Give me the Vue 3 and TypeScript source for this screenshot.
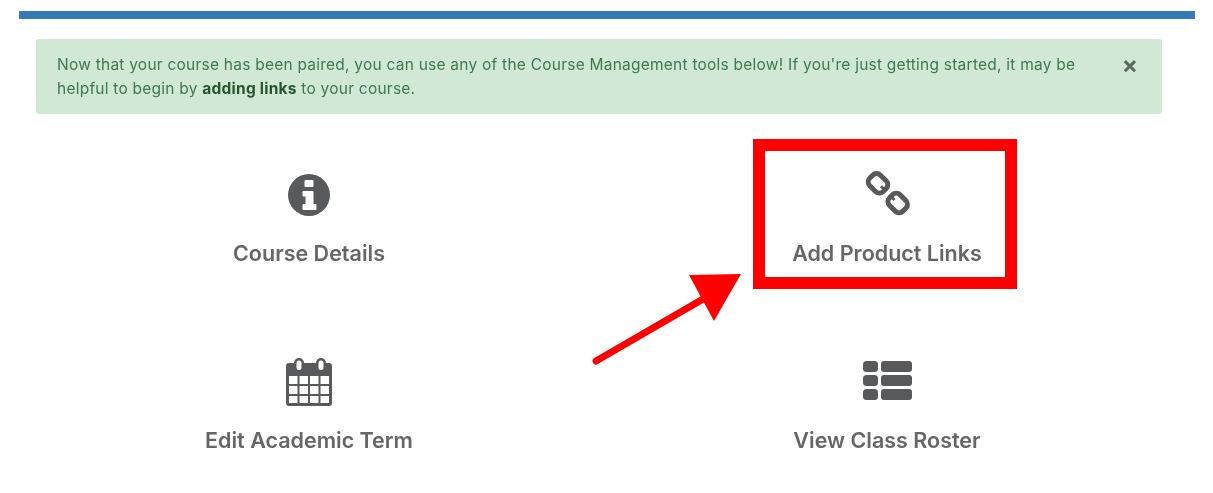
<template>
  <div class="page">
    <div class="page__bar"></div>

    <div class="alert">
      <p class="alert__text">
        Now that your course has been paired, you can use any of the Course Management tools below! If you're just getting started, it may be
        helpful to begin by <strong>adding links</strong> to your course.
      </p>
      <span class="alert__close">×</span>
    </div>

    <div class="tools">
      <div v-for="tool in tools" :key="tool.name" class="tool">
        <div class="tool__icon">
          <svg v-if="tool.icon === 'info'" width="42" height="42" viewBox="0 0 42 42">
            <path
              fill-rule="evenodd"
              d="M21 0a21 21 0 1 0 0 42a21 21 0 1 0 0-42zM17.5 6h7a1 1 0 0 1 1 1v5a1 1 0 0 1-1 1h-7a1 1 0 0 1-1-1v-5a1 1 0 0 1 1-1zM15.500 17h9a1 1 0 0 1 1 1v12h2a1 1 0 0 1 1 1v4a1 1 0 0 1-1 1h-12a1 1 0 0 1-1-1v-4a1 1 0 0 1 1-1h2v-7.500h-2a1 1 0 0 1-1-1v-3.500a1 1 0 0 1 1-1z"
            />
          </svg>

          <svg v-else-if="tool.icon === 'link'" width="48" height="48" viewBox="0 0 48 48">
            <g fill="none" stroke="currentColor" stroke-width="5">
              <rect x="5.500" y="4.800" width="19" height="15" rx="5.500" transform="rotate(45 15 12.300)" />
              <rect x="25.200" y="24.500" width="19" height="15" rx="5.500" transform="rotate(45 34.700 32)" />
              <line x1="18" y1="15.300" x2="22" y2="19.300" stroke-width="3" />
              <line x1="31.500" y1="29" x2="27.500" y2="25" stroke-width="3" />
            </g>
          </svg>

          <svg v-else-if="tool.icon === 'calendar'" width="46" height="48" viewBox="0 0 46 48">
            <path
              fill-rule="evenodd"
              d="M3 5h40a3 3 0 0 1 3 3v37a3 3 0 0 1-3 3H3a3 3 0 0 1-3-3V8a3 3 0 0 1 3-3zM3 18v8h8.500v-8zM13.500 18v8H22v-8zM24 18v8h8.500v-8zM34.500 18v8H43v-8zM3 28v8h8.500v-8zM13.500 28v8H22v-8zM24 28v8h8.500v-8zM34.500 28v8H43v-8zM3 38v7h8.500v-7zM13.500 38v7H22v-7zM24 38v7h8.500v-7zM34.500 38v7H43v-7z"
            />
            <rect x="8" y="0" width="10" height="14" rx="5" />
            <rect x="30" y="0" width="10" height="14" rx="5" />
            <rect x="10.500" y="2.500" width="5" height="9.500" rx="2.500" fill="#fff" />
            <rect x="32.500" y="2.500" width="5" height="9.500" rx="2.500" fill="#fff" />
          </svg>

          <svg v-else class="tool__list" width="49" height="39" viewBox="0 0 49 39">
            <rect x="0" y="0" width="15" height="11" rx="3.500" />
            <rect x="18" y="0" width="31" height="11" rx="3" />
            <rect x="0" y="14" width="15" height="11" rx="3.500" />
            <rect x="18" y="14" width="31" height="11" rx="3" />
            <rect x="0" y="28" width="15" height="11" rx="3.500" />
            <rect x="18" y="28" width="31" height="11" rx="3" />
          </svg>
        </div>
        <div class="tool__label">{{ tool.name }}</div>
      </div>
    </div>

    <div class="highlight"></div>
    <svg class="arrow" width="160" height="100" viewBox="0 0 160 100">
      <line x1="6" y1="90" x2="120" y2="24" stroke="#ff0000" stroke-width="7" stroke-linecap="round" />
      <polygon points="99,4 151,3 124,50" fill="#ff0000" />
    </svg>
  </div>
</template>

<script setup lang="ts">
const tools = [
  { name: 'Course Details', icon: 'info' },
  { name: 'Add Product Links', icon: 'link' },
  { name: 'Edit Academic Term', icon: 'calendar' },
  { name: 'View Class Roster', icon: 'list' },
];
</script>

<style>
html,
body {
  margin: 0;
  background: #fff;
}
</style>

<style scoped>
.page {
  position: relative;
  width: 1213px;
  height: 493px;
  padding-top: 11px;
  box-sizing: border-box;
  overflow: hidden;
  font-family: Inter, 'Liberation Sans', sans-serif;
}
.page__bar {
  height: 8px;
  margin: 0 18px 0 19px;
  background: #337ab7;
}
.alert {
  display: flex;
  justify-content: space-between;
  box-sizing: border-box;
  height: 75px;
  margin: 20px 51px 36px 36px;
  padding: 14px 24px 0 21px;
  background: #d1e8d5;
  border-radius: 3px;
  color: #3c7a50;
}
.alert__text {
  width: 1030px;
  margin: 0;
  font-size: 15.5px;
  letter-spacing: 0.235px;
  line-height: 23.5px;
  filter: blur(0.4px);
}
.alert__text strong {
  color: #24552f;
  font-weight: 700;
}
.alert__close {
  font-size: 24px;
  font-weight: 700;
  line-height: 24px;
  color: #5c6a60;
  filter: blur(0.4px);
}
.tools {
  display: grid;
  grid-template-columns: 578px 578px;
  row-gap: 70px;
  margin-left: 20px;
}
.tool {
  display: flex;
  flex-direction: column;
  align-items: center;
  height: 117px;
  padding-top: 21px;
  box-sizing: border-box;
  color: #58595b;
}
.tool__icon {
  display: flex;
  align-items: center;
  justify-content: center;
  height: 48px;
  margin-bottom: 20px;
  filter: blur(0.6px);
}
.tool__icon svg {
  fill: currentColor;
}
.tool__icon .tool__list {
  margin-bottom: 4px;
}
.tool__label {
  font-size: 21.5px;
  font-weight: 600;
  line-height: 28px;
  color: #666;
  filter: blur(0.6px);
}
.highlight {
  position: absolute;
  left: 753px;
  top: 139px;
  width: 264px;
  height: 150px;
  box-sizing: border-box;
  border: 12px solid #ff0000;
}
.arrow {
  position: absolute;
  left: 590px;
  top: 271px;
}
</style>
